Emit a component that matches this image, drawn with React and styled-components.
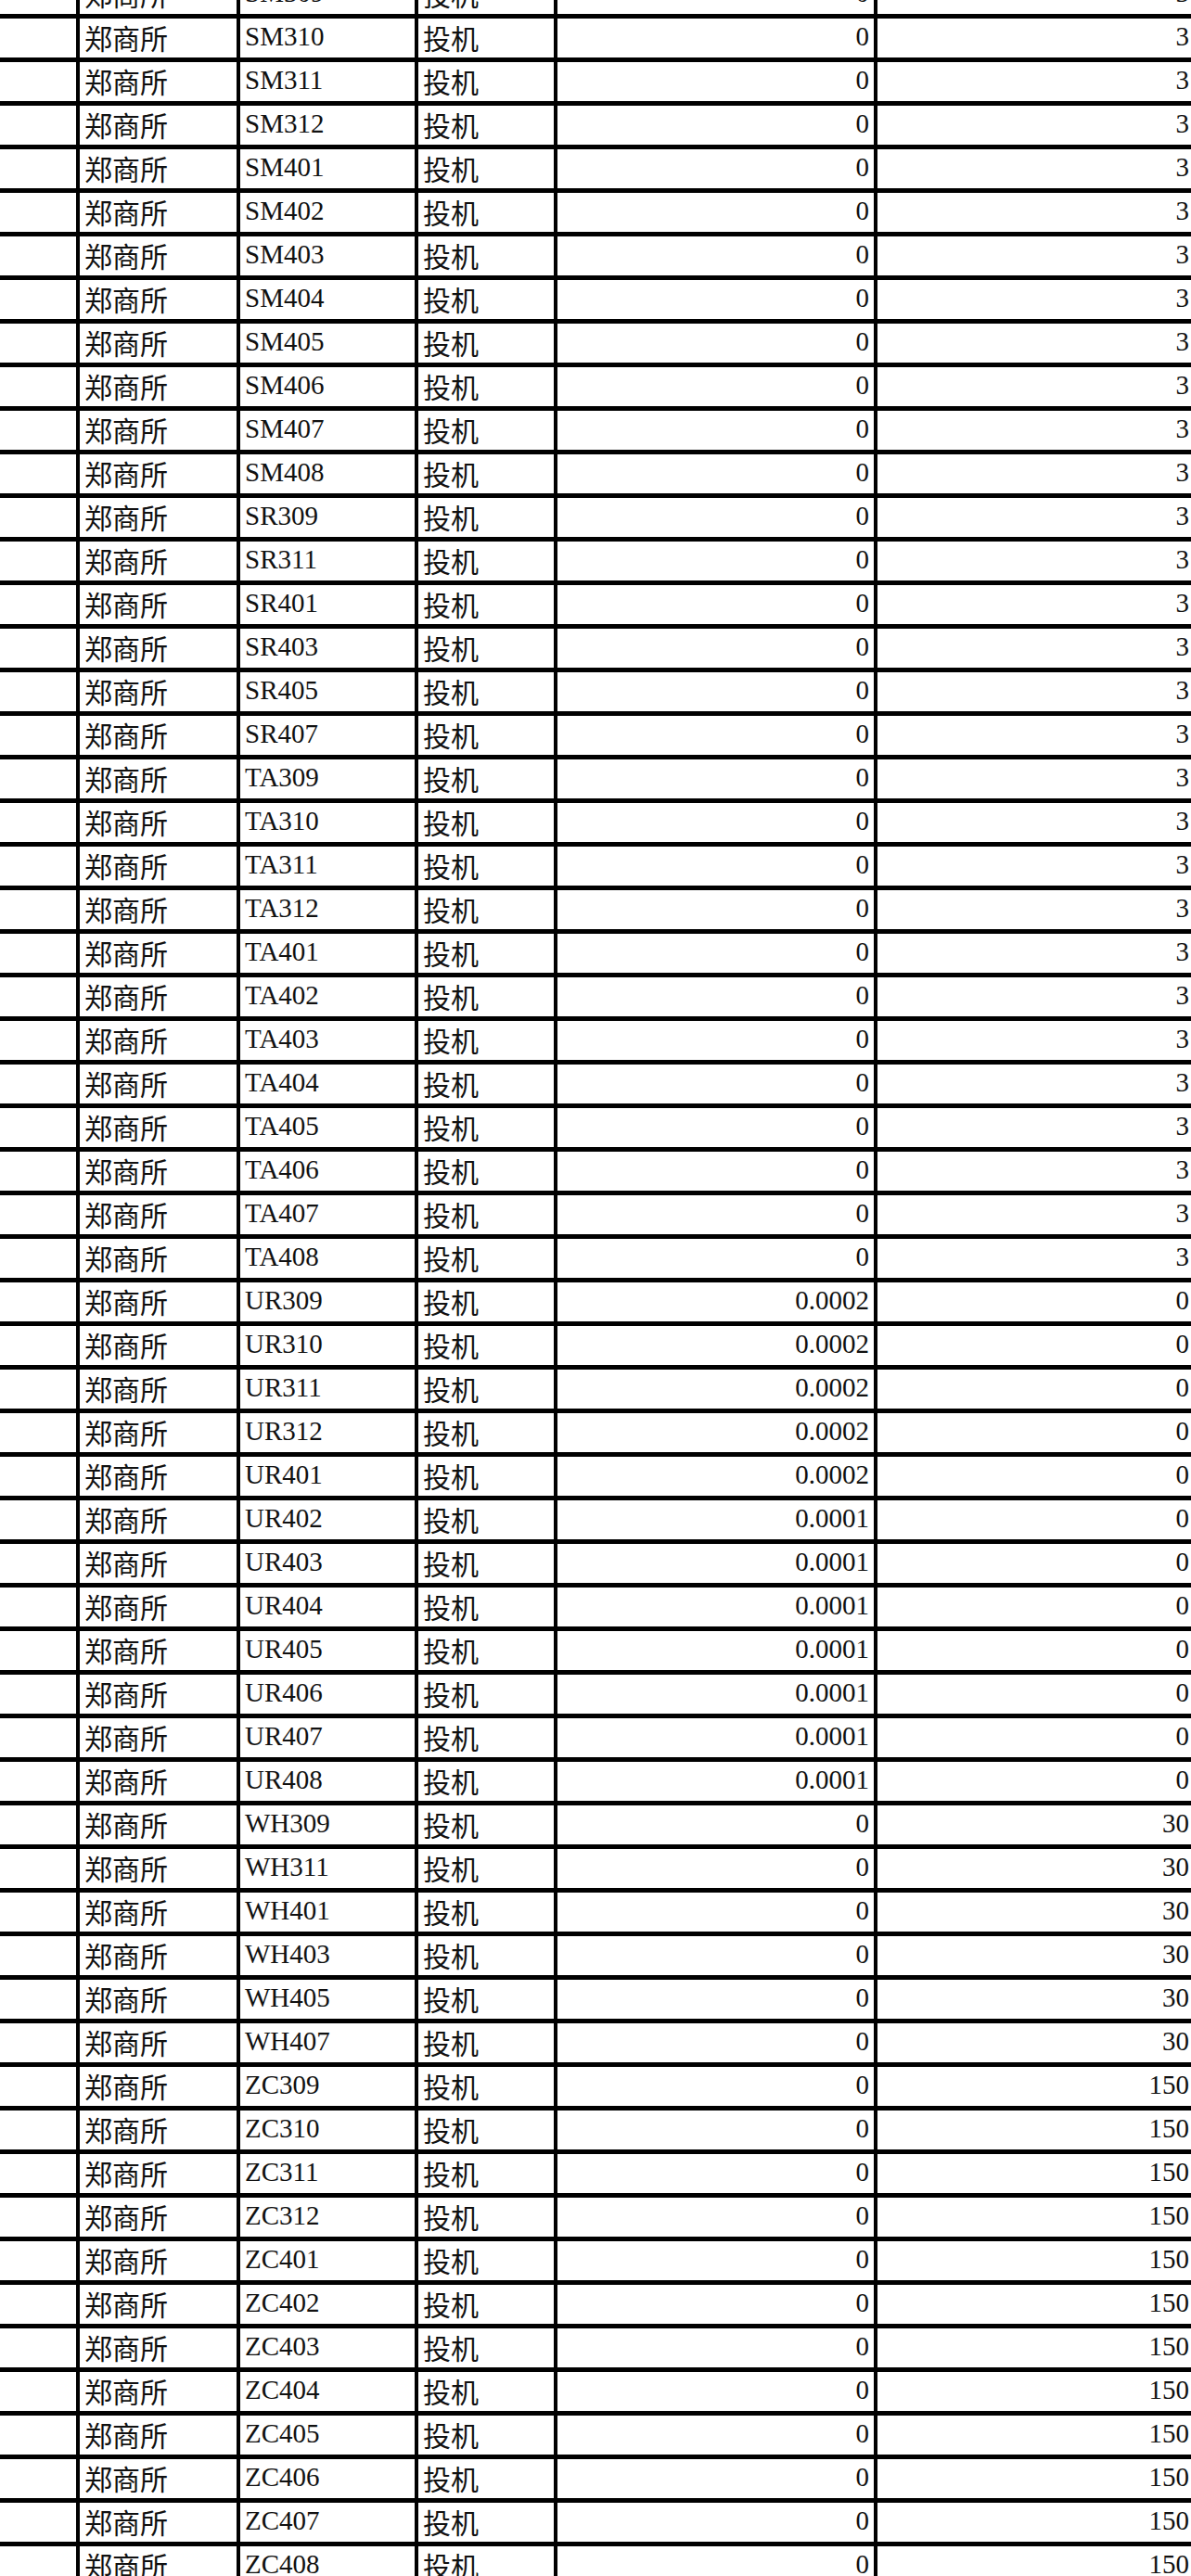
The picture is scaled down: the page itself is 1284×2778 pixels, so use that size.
import React from "react";
import styled, { createGlobalStyle } from "styled-components";

const GlobalStyle = createGlobalStyle`
    html, body {
        margin: 0;
        padding: 0;
        background: #ffffff;
    }
`;

const Viewport = styled.div`
    width: 1284px;
    height: 2778px;
    overflow: hidden;
    background: #ffffff;
`;

const Sheet = styled.div`
    margin-top: -27px;
    width: 1291px;
`;

const Row = styled.div`
    display: grid;
    grid-template-columns: 86px 173px 192px 150px 345px 345px;
    height: 47px;
    border-bottom: 5px solid #000;
    box-sizing: border-box;
`;

const Cell = styled.div`
    box-sizing: border-box;
    border-right: 4px solid #000;
    color: #111;
    white-space: nowrap;
    overflow: hidden;
    text-align: ${(p) => (p.$num ? "right" : "left")};
    padding: ${(p) => (p.$num ? "0 5px 0 0" : "0 0 0 5px")};
    font-family: ${(p) =>
        p.$cjk
            ? `"Noto Sans CJK SC", "Noto Sans", sans-serif`
            : `"Liberation Serif", "Times New Roman", serif`};
    font-size: ${(p) => (p.$cjk ? "30px" : "29px")};
    line-height: ${(p) => (p.$cjk ? "40px" : "39px")};
    padding-bottom: ${(p) => (p.$cjk ? "2px" : "3px")};
`;

const codes = [
    "SM309", "SM310", "SM311", "SM312", "SM401", "SM402", "SM403", "SM404", "SM405", "SM406", "SM407", "SM408",
    "SR309", "SR311", "SR401", "SR403", "SR405", "SR407",
    "TA309", "TA310", "TA311", "TA312", "TA401", "TA402", "TA403", "TA404", "TA405", "TA406", "TA407", "TA408",
    "UR309", "UR310", "UR311", "UR312", "UR401", "UR402", "UR403", "UR404", "UR405", "UR406", "UR407", "UR408",
    "WH309", "WH311", "WH401", "WH403", "WH405", "WH407",
    "ZC309", "ZC310", "ZC311", "ZC312", "ZC401", "ZC402", "ZC403", "ZC404", "ZC405", "ZC406", "ZC407", "ZC408",
];

function ratesFor(code) {
    const kind = code.slice(0, 2);
    if (kind === "UR") {
        const early = ["UR309", "UR310", "UR311", "UR312", "UR401"].includes(code);
        return [early ? "0.0002" : "0.0001", "0"];
    }
    if (kind === "WH") return ["0", "30"];
    if (kind === "ZC") return ["0", "150"];
    return ["0", "3"];
}

function App() {
    return (
        <Viewport>
            <GlobalStyle />
            <Sheet>
                {codes.map((code) => {
                    const [ratio, fee] = ratesFor(code);
                    return (
                        <Row key={code}>
                            <Cell />
                            <Cell $cjk>郑商所</Cell>
                            <Cell>{code}</Cell>
                            <Cell $cjk>投机</Cell>
                            <Cell $num>{ratio}</Cell>
                            <Cell $num>{fee}</Cell>
                        </Row>
                    );
                })}
            </Sheet>
        </Viewport>
    );
}

export default App;
